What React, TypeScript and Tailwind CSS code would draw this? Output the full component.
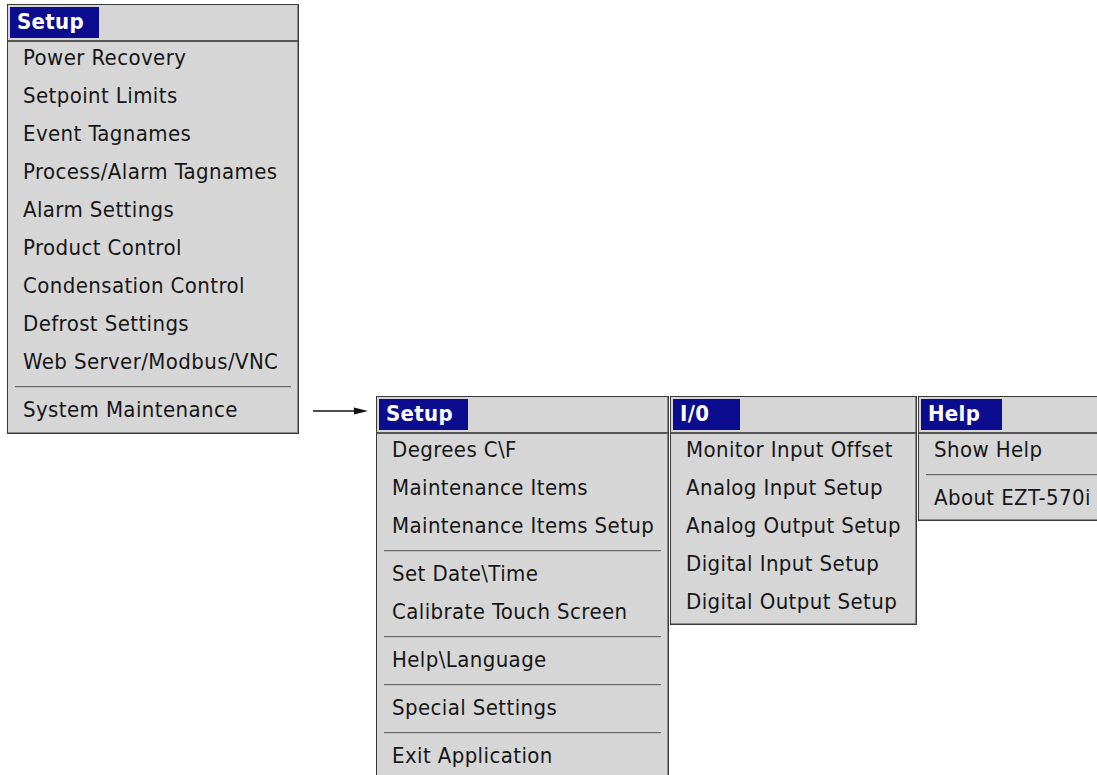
import React from "react";

type Item = { label: string } | { sep: true };

const font = { fontFamily: '"DejaVu Sans Condensed", "DejaVu Sans", sans-serif' };

function Row({ label }: { label: string }) {
  return (
    <div className="h-[38px] flex items-start pt-[3px] pl-[15px] whitespace-nowrap text-[22px] leading-[26px] tracking-[0.4px] text-[#161616]">
      {label}
    </div>
  );
}

function Sep() {
  return (
    <div className="h-[10px] px-[7px] pt-[2px]">
      <div className="h-[2px] bg-[#6a6a6a] border-b border-[#bdbdbd]" />
    </div>
  );
}

function Menu({
  title,
  titleW,
  items,
  className,
}: {
  title: string;
  titleW: string;
  items: Item[];
  className: string;
}) {
  return (
    <div
      className={`shrink-0 bg-[#d6d6d6] border border-[#3a3a3a] shadow-[inset_-1px_-1px_0_#8a8a8a] ${className}`}
      style={font}
    >
      <div className="h-[37px] pt-[2px] pl-[2px] border-b-2 border-b-[#555555]">
        <div
          className={`${titleW} h-[31px] bg-[#0c0c8e] text-white font-bold text-[22px] leading-[30px] pl-[7px] tracking-[0.3px] whitespace-nowrap`}
        >
          {title}
        </div>
      </div>
      {items.map((it, i) =>
        "sep" in it ? <Sep key={i} /> : <Row key={i} label={it.label} />
      )}
    </div>
  );
}

const L = (label: string): Item => ({ label });
const S: Item = { sep: true };

export default function App() {
  return (
    <div className="w-[1097px] h-[775px] bg-white overflow-hidden flex flex-col items-start pt-[4px] pl-[7px]">
      <Menu
        title="Setup"
        titleW="w-[89px]"
        className="w-[292px] h-[430px]"
        items={[
          L("Power Recovery"),
          L("Setpoint Limits"),
          L("Event Tagnames"),
          L("Process/Alarm Tagnames"),
          L("Alarm Settings"),
          L("Product Control"),
          L("Condensation Control"),
          L("Defrost Settings"),
          L("Web Server/Modbus/VNC"),
          S,
          L("System Maintenance"),
        ]}
      />

      <div className="flex items-start -mt-[38px] ml-[305px] gap-[1px]">
        <div className="shrink-0 w-[63px] pt-[9px]">
          <svg width="58" height="12" viewBox="0 0 58 12">
            <line x1="1" y1="6" x2="46" y2="6" stroke="#111" strokeWidth="1.5" />
            <polygon points="42,2.5 56,6 42,9.5" fill="#111" />
          </svg>
        </div>

        <Menu
          title="Setup"
          titleW="w-[89px]"
          className="w-[293px] h-[400px]"
          items={[
            L("Degrees C\\F"),
            L("Maintenance Items"),
            L("Maintenance Items Setup"),
            S,
            L("Set Date\\Time"),
            L("Calibrate Touch Screen"),
            S,
            L("Help\\Language"),
            S,
            L("Special Settings"),
            S,
            L("Exit Application"),
          ]}
        />

        <Menu
          title="I/0"
          titleW="w-[67px]"
          className="w-[247px] h-[229px]"
          items={[
            L("Monitor Input Offset"),
            L("Analog Input Setup"),
            L("Analog Output Setup"),
            L("Digital Input Setup"),
            L("Digital Output Setup"),
          ]}
        />

        <Menu
          title="Help"
          titleW="w-[81px]"
          className="w-[200px] h-[125px]"
          items={[L("Show Help"), S, L("About EZT-570i")]}
        />
      </div>
    </div>
  );
}
